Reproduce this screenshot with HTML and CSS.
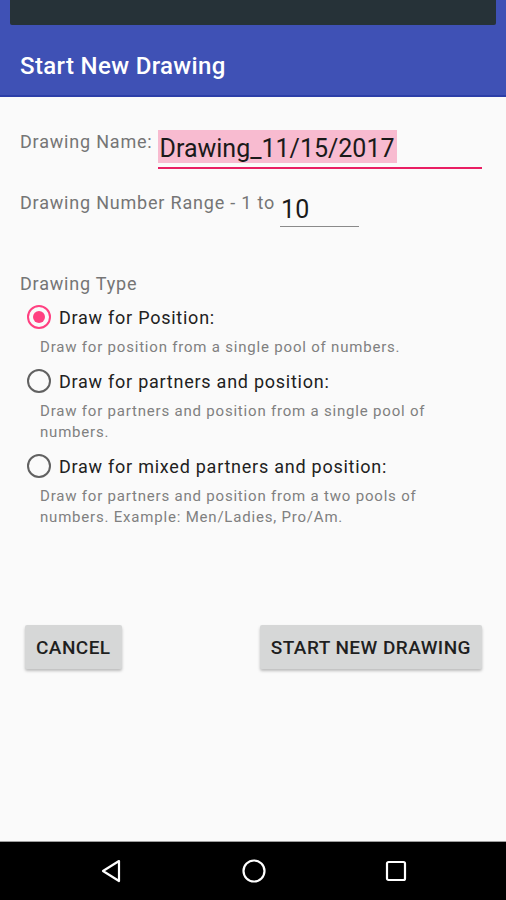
FILE: index.html
```html
<!DOCTYPE html>
<html lang="en">
<head>
<meta charset="UTF-8" />
<meta name="viewport" content="width=device-width, initial-scale=1" />
<title>Start New Drawing</title>
<link rel="stylesheet" href="styles.css">
</head>
<body>

<header class="app-bar">
  <div class="status-panel"></div>
  <h1>Start New Drawing</h1>
</header>

<main class="form">
  <div class="field-row name-row">
    <label class="field-label">Drawing Name:</label>
    <div class="edit name-edit"><span class="selected">Drawing_11/15/2017</span></div>
  </div>

  <div class="field-row range-row">
    <label class="field-label">Drawing Number Range - 1 to</label>
    <div class="edit range-edit">10</div>
  </div>

  <section class="type-group">
    <div class="group-title">Drawing Type</div>

    <div class="radio-item first">
      <div class="radio checked"><span></span></div>
      <div class="radio-label">Draw for Position:</div>
    </div>
    <p class="radio-desc">Draw for position from a single pool of numbers.</p>

    <div class="radio-item">
      <div class="radio"><span></span></div>
      <div class="radio-label">Draw for partners and position:</div>
    </div>
    <p class="radio-desc">Draw for partners and position from a single pool of numbers.</p>

    <div class="radio-item">
      <div class="radio"><span></span></div>
      <div class="radio-label">Draw for mixed partners and position:</div>
    </div>
    <p class="radio-desc">Draw for partners and position from a two pools of numbers. Example: Men/Ladies, Pro/Am.</p>
  </section>

  <div class="actions">
    <button class="flat-btn">CANCEL</button>
    <button class="flat-btn">START NEW DRAWING</button>
  </div>
</main>

<!-- Android navigation bar -->
<nav class="nav-bar">
  <svg width="22" height="24" viewBox="0 0 22 24"><path d="M19 2 L3 12 L19 22 Z" fill="none" stroke="#fff" stroke-width="2.2" stroke-linejoin="round"/></svg>
  <svg width="26" height="26" viewBox="0 0 26 26"><circle cx="13" cy="13" r="10.5" fill="none" stroke="#fff" stroke-width="2.2"/></svg>
  <svg width="22" height="22" viewBox="0 0 22 22"><rect x="2" y="2" width="18" height="18" rx="1.5" fill="none" stroke="#fff" stroke-width="2.2"/></svg>
</nav>

</body>
</html>
```

FILE: styles.css
```css
body {
  font-family: Roboto, "Noto Sans", sans-serif;
  background: #fafafa;
  margin: 0; padding: 0;
  width: 506px;
  height: 900px;
  display: flex;
  flex-direction: column;
  overflow: hidden;
}
/* Top app bar */
.app-bar {
  background: #3f51b5;
  height: 97px;
  border-bottom: 2px solid #2c3ea8;
  box-sizing: border-box;
  padding: 0 10px;
}
.status-panel {
  background: #263238;
  height: 25px;
  border-radius: 0 0 2px 2px;
}
.app-bar h1 {
  margin: 0;
  padding: 26px 0 0 10px;
  color: #fff;
  font-size: 24px;
  font-weight: 500;
  letter-spacing: 0.35px;
  line-height: 30px;
}
/* Form */
.form {
  flex: 1;
  padding: 30px 24px 0 20px;
}
.field-row {
  display: flex;
  align-items: flex-start;
}
.field-label {
  color: #757575;
  font-size: 18px;
  letter-spacing: 0.8px;
  line-height: 22px;
  padding-top: 4px;
  margin-right: 5px;
  white-space: nowrap;
}
.edit {
  font-size: 25px;
  color: #1a1a1a;
  line-height: 29px;
}
.name-edit {
  flex: 1;
  padding-top: 3px;
  padding-bottom: 4px;
  border-bottom: 2px solid #e91e63;
}
.selected {
  background: #f8bbd0;
  display: inline-block;
  padding: 4px 2px 0 2px;
}
.range-row {
  margin-top: 14px;
}
.range-row .field-label {
  padding-top: 9px;
}
.range-edit {
  width: 78px;
  padding: 12px 0 2px 1px;
  border-bottom: 1px solid #8a8a8a;
}
/* Radio group */
.type-group {
  margin-top: 46px;
}
.group-title {
  color: #757575;
  font-size: 18px;
  letter-spacing: 0.8px;
  line-height: 22px;
}
.radio-item {
  display: flex;
  align-items: center;
  gap: 8px;
  height: 30px;
  padding-left: 7px;
}
.radio-item.first {
  margin-top: 7px;
}
.radio {
  width: 20px;
  height: 20px;
  border: 2px solid #616161;
  border-radius: 50%;
  display: flex;
  align-items: center;
  justify-content: center;
}
.radio.checked {
  border-color: #ff4081;
}
.radio.checked span {
  width: 12px;
  height: 12px;
  border-radius: 50%;
  background: #ff4081;
}
.radio-label {
  color: #212121;
  font-size: 18px;
  letter-spacing: 0.75px;
}
.radio-desc {
  margin: 5px 0 8px 20px;
  color: #808080;
  font-size: 15px;
  letter-spacing: 0.8px;
  line-height: 21px;
}
/* Buttons */
.actions {
  display: flex;
  justify-content: space-between;
  margin-top: 97px;
  padding-left: 5px;
}
.flat-btn {
  font-family: Roboto, sans-serif;
  background: #d6d7d7;
  border: none;
  border-radius: 2px;
  height: 44px;
  padding: 0 11px;
  font-size: 19px;
  font-weight: 500;
  letter-spacing: 0.45px;
  color: #1f1f1f;
  box-shadow: 0 2px 3px rgba(0,0,0,0.25);
}
/* Navigation bar */
.nav-bar {
  background: #000;
  height: 58px;
  border-top: 1px solid #9e9e9e;
  display: flex;
  align-items: center;
  padding: 0 99px 0 100px;
  justify-content: space-between;
}
```
